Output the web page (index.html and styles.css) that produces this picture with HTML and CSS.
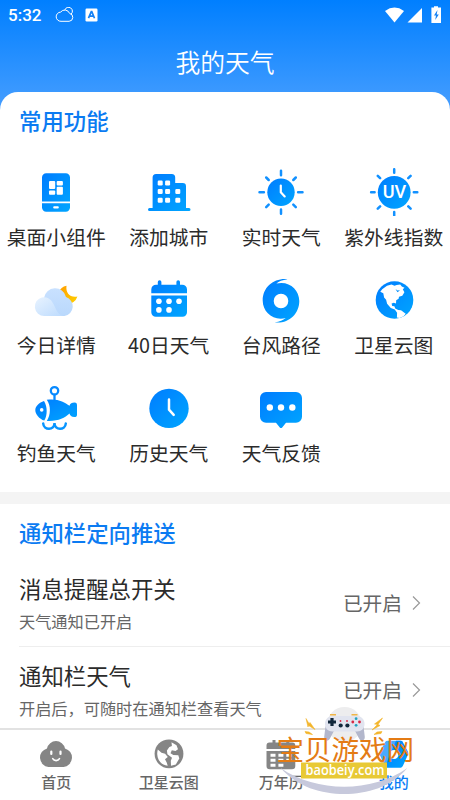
FILE: index.html
```html
<!DOCTYPE html>
<html lang="zh-CN">
<head>
<meta charset="utf-8">
<title>我的天气</title>
<link rel="stylesheet" href="styles.css">
</head>
<body>
<svg class="defs" width="0" height="0">
  <defs>
    <linearGradient id="blue" x1="0" y1="0" x2="1" y2="1"><stop offset="0" stop-color="#007cff"/><stop offset="1" stop-color="#00a6ff"/></linearGradient>
    <linearGradient id="cloud" x1="0" y1="0" x2="0" y2="1"><stop offset="0" stop-color="#c9e1ff"/><stop offset="1" stop-color="#b9d8fc"/></linearGradient>
    <linearGradient id="puff" x1="0" y1="0" x2="1" y2="1"><stop offset="0" stop-color="#e8f3ff"/><stop offset="1" stop-color="#bddbfd"/></linearGradient>
    <linearGradient id="moon" x1="0" y1="0" x2="1" y2="1"><stop offset="0" stop-color="#ff9c00"/><stop offset="1" stop-color="#ffd200"/></linearGradient>
  </defs>
</svg>
<div class="screen">
  <header class="top">
    <div class="status">
      <span class="time">5:32</span>
      <svg class="st-cloud" viewBox="0 0 20 16" width="20" height="16"><g fill="none" stroke="#fff" stroke-width="1"><path d="M6 14.3a4.6 4.6 0 0 1-.4-9.2A5.2 5.2 0 0 1 14.6 6.400a4 4 0 0 1-.5 7.900z"/><path d="M9.800 3a3.900 3.900 0 1 1 6.200 4.200"/></g></svg>
      <svg class="st-app" viewBox="0 0 13 14" width="13" height="14"><rect x=".5" y=".5" width="12" height="13" rx="1.200" fill="#fff"/><path d="M3.500 10.200 6.300 3.600h.5l2.700 6.600M4.600 8.200h3.900" fill="none" stroke="#1481f5" stroke-width="1.700"/></svg>
      <span class="spacer"></span>
      <svg viewBox="0 0 58 18" width="58" height="18"><g fill="#fff"><path d="M0 5Q9.500-1.800 19 5L9.500 16.500z"/><path d="M22.500 16.500 37 2v14.500z"/><path d="M49 1.500V.3h4v1.200h3V17H46.400V1.500z"/></g><path d="M52.500 4 49 9.500h2l-.8 4.500 3.600-5.500h-2.100z" fill="#1481f5"/></svg>
    </div>
    <h1>我的天气</h1>
  </header>
  <main class="panel">
    <section class="features">
      <h2>常用功能</h2>
      <div class="grid">
        <div class="item">
          <svg class="icon" viewBox="0 0 48 48"><path fill="url(#blue)" d="M10 33.500V9.500a4.200 4.200 0 0 1 4.200-4.200h19.600A4.200 4.200 0 0 1 38 9.500v24zM10 35.200h28v4.300a4.200 4.200 0 0 1-4.200 4.200H14.200A4.200 4.200 0 0 1 10 39.500z"/><g fill="#fff"><rect x="17" y="13" width="6.200" height="8" rx="1"/><rect x="17" y="22.400" width="6.200" height="4.400" rx="1"/><rect x="24.700" y="13" width="6.200" height="4.400" rx="1"/><rect x="24.700" y="18.800" width="6.200" height="8" rx="1"/><rect x="21.200" y="38.200" width="5.600" height="2.200" rx="1"/></g></svg>
          <span>桌面小组件</span>
        </div>
        <div class="item">
          <svg class="icon" viewBox="0 0 48 48"><path fill="url(#blue)" d="M7.600 40V9.500A3.500 3.500 0 0 1 11.100 6h15.600a3.500 3.500 0 0 1 3.500 3.500V15h7.500a3.300 3.300 0 0 1 3.300 3.300V40h3a1.500 1.500 0 0 1 0 3H4.500a1.500 1.500 0 0 1 0-3z"/><g fill="#fff"><rect x="12.700" y="12.500" width="5" height="5" rx="1.200"/><rect x="20.100" y="12.500" width="5" height="5" rx="1.200"/><rect x="12.700" y="20.900" width="5" height="5" rx="1.200"/><rect x="20.100" y="20.900" width="5" height="5" rx="1.200"/><rect x="30.300" y="20.900" width="5" height="5" rx="1.200"/><rect x="12.700" y="29.700" width="5" height="5" rx="1.200"/><rect x="20.100" y="29.700" width="5" height="5" rx="1.200"/><rect x="30.300" y="29.700" width="5" height="5" rx="1.200"/></g></svg>
          <span>添加城市</span>
        </div>
        <div class="item">
          <svg class="icon" viewBox="0 0 48 48"><circle cx="24" cy="24.300" r="13.700" fill="url(#blue)"/><path d="M24 2.800v4.400M24 41.400v4.400M2.500 24.300h4.400M41.100 24.300h4.400M9.200 9.500l2.500 2.500M36.300 36.600l2.500 2.500M38.800 9.500 36.300 12M11.700 36.600l-2.500 2.500" stroke="#1291ff" stroke-width="2.500" stroke-linecap="round"/><path d="M23.800 17.500v6.700l3.900 4.200" fill="none" stroke="#fff" stroke-width="2.200" stroke-linecap="round" stroke-linejoin="round"/></svg>
          <span>实时天气</span>
        </div>
        <div class="item">
          <svg class="icon wide" viewBox="-2 0 52 48"><circle cx="24.200" cy="24.300" r="16.400" fill="url(#blue)"/><path d="M24.200 1.200v3.500M24.200 43.900v3.500M1.100 24.300h3.500M43.800 24.300h3.500M7.800 7.900l2.300 2.300M38.300 38.400l2.300 2.300M40.600 7.900l-2.300 2.300M10.100 38.400l-2.300 2.300" stroke="#1291ff" stroke-width="2.500" stroke-linecap="round"/><text class="uv" x="24.400" y="30.400" textLength="23.500" lengthAdjust="spacingAndGlyphs">UV</text></svg>
          <span>紫外线指数</span>
        </div>
        <div class="item">
          <svg class="icon" viewBox="0 0 48 48"><path fill="url(#moon)" d="M34.500 9.700c-1 7.500 3.700 12.100 10.900 10.700A10.400 10.400 0 0 1 35 27.800 10 10 0 0 1 27 16c1-3.300 3.700-5.700 7.500-6.300z"/><path fill="url(#cloud)" d="M12 22a11.200 11.200 0 0 1 22-1 9.800 9.800 0 0 1-1.500 19H12z"/><path fill="url(#puff)" d="M12.200 40a9.400 9.400 0 1 1 8.700-13C24 32.500 25 38 31 40z"/></svg>
          <span>今日详情</span>
        </div>
        <div class="item">
          <svg class="icon" viewBox="0 0 48 48"><path fill="url(#blue)" d="M6.300 17.200v-3.700a4.800 4.800 0 0 1 4.800-4.800h1.700V6a1.800 1.800 0 0 1 3.600 0v2.700h15V6A1.800 1.800 0 0 1 35 6v2.700h2.200a4.800 4.800 0 0 1 4.800 4.800v3.700zM6.300 19.400H42v16.800a4.500 4.500 0 0 1-4.500 4.500H10.800a4.500 4.500 0 0 1-4.500-4.500z"/><g fill="#fff"><circle cx="13.900" cy="25.200" r="2.800"/><circle cx="24" cy="25.200" r="2.800"/><circle cx="34" cy="25.200" r="2.800"/><circle cx="13.900" cy="33.900" r="2.800"/><circle cx="24" cy="33.900" r="2.800"/></g></svg>
          <span>40日天气</span>
        </div>
        <div class="item">
          <svg class="icon" viewBox="0 0 48 48"><path fill="url(#blue)" fill-rule="evenodd" d="M30.500 3.200C17 1.800 5.700 11 5.700 24.500c0 10 7.800 18.200 18 18.200 1.800 0 3.500-.2 5-.6-2.500 2-6 3.700-11.200 4.300C31 48.200 42.300 38.500 42.300 25 42.300 15 34.500 6.900 24.400 6.900c-1.800 0-3.500.2-5 .6 2.500-2 6-3.700 11.100-4.300zM24 17.700a7.300 7.300 0 1 1 0 14.600 7.300 7.300 0 0 1 0-14.600z"/></svg>
          <span>台风路径</span>
        </div>
        <div class="item">
          <svg class="icon" viewBox="0 0 48 48"><circle cx="24.500" cy="24" r="18.800" fill="url(#blue)"/><path fill="#fff" d="M12.200 13.200 17 9.800l4.500-1.200 3 1.200 2.200-.7 3.500-.6 1.600 2 2.700 1.200-1.700 1.500 1.600 3-2.100 3.500-3.300 1.100-.4 2-2.400 1.500-.2 3.200-2.200-.7-2.200.8.600 2.400 2.200.2.800 2.400 3 1.500 2.800.2 4.700 3.500-2 2.500-4.200 1.600-2.600-.5.200-4.600-2.300-3.200-4-1.700-3.700-4.200-1-4-2-2.200-.8-4.300-3-1.500z"/><path d="m25.500 13 2 1.500 2.500-.3-2.500 2z" fill="#008ffb"/></svg>
          <span>卫星云图</span>
        </div>
        <div class="item">
          <svg class="icon" viewBox="0 0 48 48"><circle cx="22.500" cy="6.800" r="3.700" fill="none" stroke="#0789ff" stroke-width="2.300"/><path d="M22.500 10.500V18" stroke="#0789ff" stroke-width="2.300"/><path fill="url(#blue)" d="M12 17c-4.800 1.500-8.700 5.200-8.700 9.200s4 8.700 9 10.400c3.200-5 3.300-14.200-.3-19.600zM14.800 15.800c11-1.500 17.600 2.200 22.700 6C38 19.300 40 18.400 42.500 18.400c2 0 2.500 1 2.500 3v9c0 2-.7 2.600-2.700 2.600-2.700 0-4.500-1.700-4.800-3.500-5 4.400-11 7.900-22.700 7.400 4-6 4.300-15 0-21.100z"/><circle cx="9.700" cy="25.900" r="1.800" fill="#fff"/><path d="M11.200 39.500c.5 7 11.300 7.200 11.300-.5 0 7.700 10.800 7.500 11.300.5" fill="none" stroke="#0795ff" stroke-width="2.500" stroke-linecap="round"/></svg>
          <span>钓鱼天气</span>
        </div>
        <div class="item">
          <svg class="icon" viewBox="0 0 48 48"><circle cx="24" cy="24.400" r="19.700" fill="url(#blue)"/><path d="M24 15.500v10.200l4.700 5.200" fill="none" stroke="#fff" stroke-width="2.500" stroke-linecap="round" stroke-linejoin="round"/></svg>
          <span>历史天气</span>
        </div>
        <div class="item">
          <svg class="icon" viewBox="0 0 48 48"><path fill="url(#blue)" d="M9 8h30a6 6 0 0 1 6 6v18.700a6 6 0 0 1-6 6H29l-3.800 4.700q-1.200 1-2.400 0L19 38.700H9a6 6 0 0 1-6-6V14a6 6 0 0 1 6-6z"/><g fill="#fff"><circle cx="12.800" cy="23.500" r="3.200"/><circle cx="24" cy="23.500" r="3.200"/><circle cx="35.300" cy="23.500" r="3.200"/></g></svg>
          <span>天气反馈</span>
        </div>
      </div>
    </section>
    <section class="push">
      <h2>通知栏定向推送</h2>
      <div class="row">
        <div class="copy"><h3>消息提醒总开关</h3><p>天气通知已开启</p></div>
        <span class="value">已开启</span>
        <svg class="chev" viewBox="0 0 9 16" width="9" height="16"><path d="m1 1.500 6.500 6.500L1 14.500" fill="none" stroke="#999" stroke-width="1.200"/></svg>
      </div>
      <div class="row">
        <div class="copy"><h3>通知栏天气</h3><p>开启后，可随时在通知栏查看天气</p></div>
        <span class="value">已开启</span>
        <svg class="chev" viewBox="0 0 9 16" width="9" height="16"><path d="m1 1.500 6.500 6.500L1 14.500" fill="none" stroke="#999" stroke-width="1.200"/></svg>
      </div>
    </section>
  </main>
  <nav class="tabs">
    <div class="tab">
      <svg viewBox="0 0 36 36"><path fill="#858585" d="M10.500 31A9.500 9.500 0 0 1 9 12.400a9.200 9.200 0 0 1 18 0A9.500 9.500 0 0 1 25.500 31z"/><path d="M13.300 15.500v2.500M22.500 15.500v2.500" stroke="#fff" stroke-width="2.200" stroke-linecap="round"/><path d="M14.700 22.700c1.500 2.500 5.300 2.500 6.800 0" fill="none" stroke="#fff" stroke-width="1.600" stroke-linecap="round"/></svg>
      <span>首页</span>
    </div>
    <div class="tab">
      <svg viewBox="0 0 36 36"><circle cx="18" cy="17.800" r="14.400" fill="#858585"/><path fill="#fff" d="M6.800 13.500l3.700 3.200 3.600 1 2.700 3.300-2.800 2.300 1.700 3.200 1 3.300C10.500 29 6.500 24.500 6.200 18c0-1.600.2-3 .6-4.500zM20.500 6.200l5 3 1.500 4-2.500 1.800-3.700-.8-1.300 3 2.800 1.800 5 .3 1 3.200-3.500 6-4.800 1.300-.2-5 1.200-3-4.600-3.500-.5-3.800 2.500-3.500 2.500-1z"/></svg>
      <span>卫星云图</span>
    </div>
    <div class="tab">
      <svg viewBox="0 0 36 36"><path fill="#858585" d="M3.500 13V9.500a3 3 0 0 1 3-3h3V4h3v2.500h10.800V4h3v2.500h3a3 3 0 0 1 3 3V13zM3.500 15h28.800v15a3.300 3.300 0 0 1-3.300 3.300H6.800A3.300 3.300 0 0 1 3.500 30z"/><g fill="#fff"><path d="M7.500 17.800h5v3h-5zM15.400 17.800h5v3h-5zM23.300 17.800h5v3h-5zM7.500 22.800h5v3h-5zM15.400 22.800h5v3h-5zM23.300 22.800h5v3h-5zM7.500 27.800h5v3h-5zM15.400 27.800h5v3h-5z"/></g></svg>
      <span>万年历</span>
    </div>
    <div class="tab active">
      <svg viewBox="0 0 36 36"><path fill="#48aaff" d="M11.500 4.700h13q1.500 0 2.300 1.300L18 18.500 9 30.300l-5-11q-.7-1.800 0-3.600L9.200 6q.8-1.300 2.300-1.300z"/><path fill="url(#blue)" d="M20 4.700h4.500q1.500 0 2.300 1.300l5 9.500q.9 1.800 0 3.600l-5 11q-.8 1.600-2.300 1.600h-13q-1.500 0-2.500-1.500z"/><circle cx="18" cy="18.500" r="4.500" fill="#fff"/></svg>
      <span>我的</span>
    </div>
  </nav>
  <div class="badge">
    <svg viewBox="0 0 144 94" width="144" height="94">
      <circle cx="71.500" cy="20.500" r="17.500" fill="#ededee"/>
      <path d="M7.700 64c36 25 91 25 126.600 0-16 19-40 26-63 26s-47-7-63.600-26z" fill="#c7c9dc"/>
      <path d="m52.500 22-1.300 11c-.2 4 4 5 6 1l4-7.500zM90.500 22l1.300 11c.2 4-4 5-6 1l-4-7.500z" fill="#b3b7cc"/>
      <path d="M60 12h23c5.500 0 8.500 3.500 8.500 8s-3 7.500-7.500 7.500H59.500c-4.500 0-7.500-3-7.500-7.500s3-8 8-8z" fill="#e1e4ef"/>
      <path d="M57 10.700h6M78.500 10.700h6" stroke="#f0b547" stroke-width="1.600"/>
      <path d="M59 14v8M55 18h8" stroke="#11273b" stroke-width="3.200"/>
      <g fill="#11273b"><circle cx="67.700" cy="21.500" r="2.100"/><circle cx="74.400" cy="21.500" r="2.100"/></g>
      <g fill="#d92743"><circle cx="67.500" cy="17" r=".9"/><circle cx="74" cy="17" r=".9"/><circle cx="79.800" cy="18" r="1.400"/><circle cx="86.500" cy="18" r="1.400"/></g>
      <g fill="#21a2c0"><circle cx="83.100" cy="14.700" r="1.400"/><circle cx="83.100" cy="21.300" r="1.400"/></g>
      <path d="m33 14.500 3 5 1-1 5 7-6.500-4-.5 1.500zM109.500 14l-8 6 3 .5-5.500 5.500 8-4.500-2-1zM32 27.500l4 .5 3.500 2.500-6.500-1zM109 27.500l-5 .5-3 2.500 7-1z" fill="#f3b52c" stroke="#f3b52c" stroke-width=".6"/>
      <text class="site" x="3.500" y="55.500">宝贝游戏网</text>
      <rect x="28" y="58.500" width="86" height="16" fill="#e8c935"/>
      <text class="domain" x="32.500" y="70.500" textLength="79" lengthAdjust="spacingAndGlyphs">baobeiy.com</text>
    </svg>
  </div>
</div>
</body>
</html>
```
FILE: styles.css
```css
* { box-sizing: border-box; margin: 0; padding: 0; }

body {
  font-family: "Noto Sans CJK SC", sans-serif;
  color: #2b2b2b;
  background: #fff;
}

.defs { display: block; }

.screen {
  position: relative;
  display: flex;
  flex-direction: column;
  width: 450px;
  height: 800px;
  overflow: hidden;
  background: linear-gradient(#007fff 0, #409bff 100px, #409bff 110px, #fff 111px);
}

.top { height: 92px; flex: none; color: #fff; }

.status {
  display: flex;
  align-items: center;
  height: 31px;
  padding: 0 8px 0 8px;
}
.time { width: 47px; font: 500 17px/31px Roboto, sans-serif; }
.st-cloud { margin-top: -1px; }
.st-app { margin: -1px 0 0 10px; }
.spacer { flex: 1; }
.status svg:last-child { margin-right: -1px; margin-top: -2px; }

h1 {
  font-size: 24.800px;
  line-height: 36px;
  font-weight: 350;
  text-align: center;
  padding-top: 12px;
}

.panel {
  flex: 1;
  min-height: 0;
  overflow: hidden;
  background: #fff;
  border-radius: 18px 18px 0 0;
}

h2 {
  color: #0b7bf2;
  font-size: 22.400px;
  line-height: 34px;
  font-weight: 500;
  padding-left: 19px;
}

.features {
  height: 412px;
  padding-top: 11px;
  border-bottom: 12px solid #f4f4f4;
}
.grid {
  display: grid;
  grid-template-columns: repeat(4, 1fr);
  grid-auto-rows: 108px;
  padding-top: 31px;
}
.item {
  display: flex;
  flex-direction: column;
  align-items: center;
  font-size: 19.800px;
  line-height: 30px;
  white-space: nowrap;
}
.icon { width: 48px; height: 48px; margin-bottom: 6px; }
.wide { width: 52px; }
.uv { font: 500 18px Roboto, sans-serif; fill: #fff; text-anchor: middle; }

.push { padding-top: 11px; }
.row {
  display: flex;
  align-items: center;
  height: 87px;
  margin-left: 19px;
  padding-right: 29px;
  border-bottom: 1px solid #eee;
}
.push h2 { margin-bottom: 11px; }
.copy { flex: 1; padding-bottom: 2px; }
h3 { font-size: 22.400px; line-height: 34px; font-weight: 400; }
.row p { font-size: 16.200px; line-height: 24px; color: #666; margin-top: 4px; }
.value { font-size: 19.700px; line-height: 30px; color: #666; margin-right: 10px; }

.tabs {
  display: flex;
  flex: none;
  height: 72px;
  background: #fff;
  border-top: 2px solid #e2e2e2;
}
.tab {
  display: flex;
  flex: 1;
  flex-direction: column;
  align-items: center;
  padding-top: 6px;
  color: #666;
  font-size: 15px;
  line-height: 22px;
  font-weight: 500;
}
.tab svg { width: 36px; height: 36px; margin-bottom: -1px; }
.active { color: #087df5; }

.badge { position: absolute; left: 273px; top: 704px; width: 144px; height: 94px; }
.site { font: 400 27.500px "Noto Sans CJK SC", sans-serif; fill: #e47b14; }
.domain { font: 600 14.500px "Open Sans", sans-serif; fill: #fff; }
```
